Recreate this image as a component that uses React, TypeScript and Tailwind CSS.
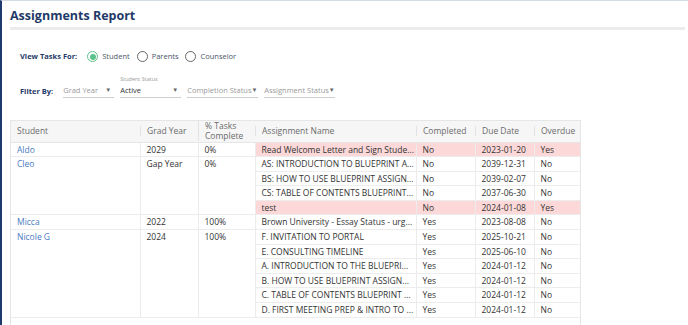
import React from 'react'

interface Task {
  name: string
  completed: string
  due: string
  overdue: string
}

interface StudentRow {
  student: string
  gradYear: string
  pct: string
  tasks: Task[]
}

const rows: StudentRow[] = [
  {
    student: 'Aldo',
    gradYear: '2029',
    pct: '0%',
    tasks: [{ name: 'Read Welcome Letter and Sign Stude...', completed: 'No', due: '2023-01-20', overdue: 'Yes' }],
  },
  {
    student: 'Cleo',
    gradYear: 'Gap Year',
    pct: '0%',
    tasks: [
      { name: 'AS: INTRODUCTION TO BLUEPRINT A...', completed: 'No', due: '2039-12-31', overdue: 'No' },
      { name: 'BS: HOW TO USE BLUEPRINT ASSIGN...', completed: 'No', due: '2039-02-07', overdue: 'No' },
      { name: 'CS: TABLE OF CONTENTS BLUEPRINT...', completed: 'No', due: '2037-06-30', overdue: 'No' },
      { name: 'test', completed: 'No', due: '2024-01-08', overdue: 'Yes' },
    ],
  },
  {
    student: 'Micca',
    gradYear: '2022',
    pct: '100%',
    tasks: [{ name: 'Brown University - Essay Status - urg...', completed: 'Yes', due: '2023-08-08', overdue: 'No' }],
  },
  {
    student: 'Nicole G',
    gradYear: '2024',
    pct: '100%',
    tasks: [
      { name: 'F. INVITATION TO PORTAL', completed: 'Yes', due: '2025-10-21', overdue: 'No' },
      { name: 'E. CONSULTING TIMELINE', completed: 'Yes', due: '2025-06-10', overdue: 'No' },
      { name: 'A. INTRODUCTION TO THE BLUEPRI...', completed: 'Yes', due: '2024-01-12', overdue: 'No' },
      { name: 'B. HOW TO USE BLUEPRINT ASSIGN...', completed: 'Yes', due: '2024-01-12', overdue: 'No' },
      { name: 'C. TABLE OF CONTENTS BLUEPRINT ...', completed: 'Yes', due: '2024-01-12', overdue: 'No' },
      { name: 'D. FIRST MEETING PREP & INTRO TO ...', completed: 'Yes', due: '2024-01-12', overdue: 'No' },
    ],
  },
]

function Radio({ label, checked }: { label: string; checked?: boolean }) {
  return (
    <label className="flex items-center gap-[4px] text-[7.5px] leading-[11px] text-[#4a5568]">
      <span
        className={`flex h-[11px] w-[11px] items-center justify-center rounded-full border ${
          checked ? 'border-[#5cc28a]' : 'border-[#666]'
        }`}
      >
        {checked && <span className="h-[6px] w-[6px] rounded-full bg-[#5cc28a]" />}
      </span>
      {label}
    </label>
  )
}

function Select({ label, value, width, top }: { label: string; value?: string; width: string; top?: string }) {
  return (
    <div className={`relative flex ${width} items-center justify-between whitespace-nowrap border-b border-[#cfcfcf] pb-[2px] pr-[3px]`}>
      {top && <span className="absolute -top-[9px] left-0 text-[5.5px] leading-[7px] text-[#999]">{top}</span>}
      <span className={`text-[7.5px] leading-[10px] ${value ? 'text-[#333]' : 'text-[#9a9a9a]'}`}>{value ?? label}</span>
      <span className="text-[6px] leading-[10px] text-[#666]">▼</span>
    </div>
  )
}

const cell = 'px-[6px] border-b border-r border-[#ececec] align-top leading-[13.6px] overflow-hidden'

function App() {
  return (
    <div
      className="h-[325px] w-[688px] overflow-hidden border-l-2 border-t border-l-[#1e3a6e] border-t-[#d3dbe6] bg-white"
      style={{ fontFamily: '"Open Sans", "Noto Sans", sans-serif' }}
    >
      <div className="pl-[8px] pr-[3px] pt-[6px]">
        <h1 className="text-[12.5px] font-bold leading-[17px] text-[#1f3a68]">Assignments Report</h1>
        <div className="mt-[3px] h-[3px] bg-[#ececec]" />
      </div>

      <div className="mt-[21px] flex items-center pl-[18px]">
        <span className="mr-[10px] text-[7.5px] font-bold leading-[11px] text-[#1f3a68]">View Tasks For:</span>
        <div className="flex items-center gap-[7px]">
          <Radio label="Student" checked />
          <Radio label="Parents" />
          <Radio label="Counselor" />
        </div>
      </div>

      <div className="mt-[23px] flex items-end pl-[18px]">
        <span className="mr-[10px] pb-[2px] text-[7.5px] font-bold leading-[10px] text-[#1f3a68]">Filter By:</span>
        <div className="flex items-end gap-[6px]">
          <Select label="Grad Year" width="w-[51px]" />
          <Select label="Active" value="Active" top="Student Status" width="w-[61px]" />
          <Select label="Completion Status" width="w-[71px]" />
          <Select label="Assignment Status" width="w-[71px]" />
        </div>
      </div>

      <div className="ml-[8px] mt-[22px] w-[571px] border border-[#e6e6e6] pb-[10px]">
        <table className="w-full table-fixed border-collapse text-[8.5px] text-[#333]">
          <colgroup>
            <col className="w-[129px]" />
            <col className="w-[58px]" />
            <col className="w-[57px]" />
            <col className="w-[161px]" />
            <col className="w-[59px]" />
            <col className="w-[59px]" />
            <col />
          </colgroup>
          <thead>
            <tr className="h-[21px] bg-[#f6f6f6] text-left text-[8.5px] font-normal text-[#6b6b6b]">
              {['Student', 'Grad Year', '% Tasks Complete', 'Assignment Name', 'Completed', 'Due Date', 'Overdue'].map((h, i) => (
                <th key={h} className="border-b border-[#e6e6e6] p-0 font-normal">
                  <div
                    className={`px-[6px] leading-[10px] ${i > 0 ? 'border-l border-[#e3e3e3]' : ''} ${
                      i === 2 ? 'w-[52px]' : ''
                    }`}
                  >
                    {h}
                  </div>
                </th>
              ))}
            </tr>
          </thead>
          <tbody>
            {rows.map((r) =>
              r.tasks.map((t, i) => {
                const late = t.overdue === 'Yes'
                const bg = late ? 'bg-[#fcd8d8]' : ''
                return (
                  <tr key={r.student + i}>
                    {i === 0 && (
                      <>
                        <td rowSpan={r.tasks.length} className={`${cell} text-[#4a7bc0]`}>
                          {r.student}
                        </td>
                        <td rowSpan={r.tasks.length} className={cell}>
                          {r.gradYear}
                        </td>
                        <td rowSpan={r.tasks.length} className={cell}>
                          {r.pct}
                        </td>
                      </>
                    )}
                    <td className={`${cell} whitespace-nowrap ${bg}`}>{t.name}</td>
                    <td className={`${cell} ${bg}`}>{t.completed}</td>
                    <td className={`${cell} ${bg}`}>{t.due}</td>
                    <td className={`${cell} border-r-0 ${bg}`}>{t.overdue}</td>
                  </tr>
                )
              })
            )}
          </tbody>
        </table>
      </div>
    </div>
  )
}

export default App
